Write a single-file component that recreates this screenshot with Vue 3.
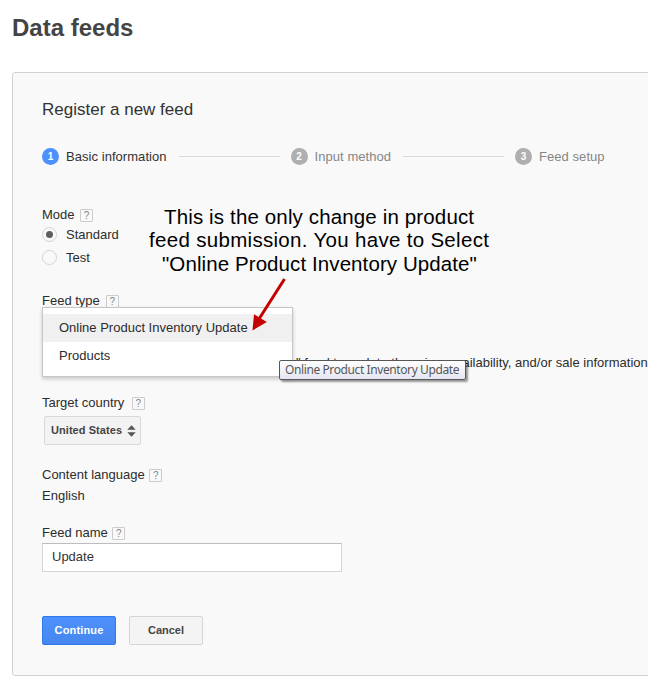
<script setup>
import { ref } from 'vue'

const steps = [
  { n: 1, label: 'Basic information', active: true },
  { n: 2, label: 'Input method', active: false },
  { n: 3, label: 'Feed setup', active: false },
]
const modes = ['Standard', 'Test']
const mode = ref('Standard')
const feedTypes = ['Online Product Inventory Update', 'Products']
const feedType = ref(feedTypes[0])
const feedName = ref('Update')
</script>

<template>
  <main class="page">
    <h1 class="title">Data feeds</h1>
    <section class="panel">
      <h2 class="heading">Register a new feed</h2>
      <div class="steps">
        <template v-for="s in steps" :key="s.n">
          <i v-if="s.n > 1" class="rule"></i>
          <div class="step" :class="{ active: s.active }">
            <span class="num">{{ s.n }}</span>
            <span class="step-label">{{ s.label }}</span>
          </div>
        </template>
      </div>

      <div class="field mode">
        <div class="label">Mode<span class="help">?</span></div>
        <div v-for="m in modes" :key="m" class="radio" @click="mode = m">
          <span class="dot" :class="{ on: mode === m }"></span><span>{{ m }}</span>
        </div>
      </div>

      <div class="field type">
        <div class="label">Feed type<span class="help">?</span></div>
        <div class="hint">" feed to update the price, availability, and/or sale information</div>
        <div class="menu">
          <div
            v-for="t in feedTypes"
            :key="t"
            class="option"
            :class="{ hover: feedType === t }"
            @click="feedType = t"
          >{{ t }}</div>
        </div>
        <div class="tooltip">Online Product Inventory Update</div>
      </div>

      <div class="field country">
        <div class="label">Target country<span class="help">?</span></div>
        <button class="select">
          <span>United States</span>
          <svg width="9" height="12" viewBox="0 0 9 12"><path d="M.3 4.8 4.5.3l4.2 4.5zM.3 7.2l4.2 4.5 4.2-4.5z" fill="#555" /></svg>
        </button>
      </div>

      <div class="field language">
        <div class="label">Content language<span class="help">?</span></div>
        <div class="value">English</div>
      </div>

      <div class="field name">
        <div class="label">Feed name<span class="help">?</span></div>
        <input v-model="feedName" class="input" type="text" />
      </div>

      <div class="actions">
        <button class="btn primary">Continue</button>
        <button class="btn">Cancel</button>
      </div>
    </section>

    <div class="note">
      <div class="n1">This is the only change in product</div>
      <div class="n2">feed submission. You have to Select</div>
      <div class="n3">"Online Product Inventory Update"</div>
    </div>
    <svg class="arrow" width="40" height="56" viewBox="0 0 40 56">
      <path d="M34.5 3 9 43" stroke="#c40000" stroke-width="3" fill="none" />
      <path d="M2.5 54.5 4 38.3 16.8 46z" fill="#c40000" />
    </svg>
  </main>
</template>

<style>
body {
  margin: 0;
  background: #fff;
  overflow: hidden;
}
</style>

<style scoped>
.page {
  position: relative;
  box-sizing: border-box;
  width: 648px;
  height: 683px;
  padding: 12px 0 0 12px;
  overflow: hidden;
  font: 13px/16px "Liberation Sans", Arial, sans-serif;
  color: #2c2c2c;
}
.title {
  margin: 0 0 28px;
  font-size: 24px;
  line-height: 32px;
  color: #444;
}
.panel {
  box-sizing: border-box;
  width: 700px;
  height: 604px;
  padding: 27px 0 0 29px;
  border: 1px solid #d2d2d2;
  border-radius: 3px;
  background: #f9f9f9;
}
.heading {
  margin: 0;
  font-size: 17px;
  font-weight: 400;
  line-height: 20px;
  color: #333;
}
.steps {
  display: flex;
  align-items: center;
  height: 17px;
  margin-top: 28px;
}
.step {
  display: flex;
  align-items: center;
  gap: 7px;
  color: #868686;
}
.step.active {
  color: #333;
}
.step-label {
  letter-spacing: 0.05px;
}
.num {
  width: 17px;
  height: 17px;
  border-radius: 50%;
  background: #afafaf;
  color: #fff;
  font-size: 10px;
  font-weight: 700;
  line-height: 17px;
  text-align: center;
}
.active .num {
  background: #4d90fe;
}
.rule {
  width: 101px;
  height: 1px;
  margin: 0 11px 0 12px;
  background: #d9d9d9;
}
.label {
  display: flex;
  align-items: center;
  height: 16px;
}
.help {
  box-sizing: border-box;
  width: 13px;
  height: 13px;
  margin: 1px 0 0 5.5px;
  border: 1px solid #ccc;
  border-radius: 1px;
  font-size: 10px;
  line-height: 11px;
  text-align: center;
  color: #888;
}
.type .help {
  margin-left: 6px;
}
.country .help {
  margin-left: 7.5px;
}
.language .help,
.name .help {
  margin-left: 4.5px;
}
.mode {
  height: 86px;
  margin-top: 42px;
}
.radio {
  display: flex;
  align-items: center;
  gap: 9px;
  height: 23px;
}
.dot {
  box-sizing: border-box;
  display: flex;
  align-items: center;
  justify-content: center;
  width: 15px;
  height: 15px;
  border: 1px solid #d4d4d4;
  border-radius: 50%;
}
.dot.on::after {
  content: "";
  width: 7px;
  height: 7px;
  border-radius: 50%;
  background: #5e5e5e;
}
.type {
  position: relative;
  height: 102px;
}
.hint {
  padding: 46px 0 0 254px;
  letter-spacing: 0.02px;
  white-space: nowrap;
}
.menu {
  position: absolute;
  left: 0;
  top: 14px;
  box-sizing: border-box;
  width: 251px;
  height: 70px;
  padding-top: 6px;
  border: 1px solid #c6c6c6;
  background: #fff;
  box-shadow: 0 2px 4px rgba(0, 0, 0, 0.2);
}
.option {
  padding-left: 16px;
  line-height: 28px;
}
.option.hover {
  background: #f0f0f0;
}
.tooltip {
  position: absolute;
  left: 237px;
  top: 67px;
  box-sizing: border-box;
  width: 187px;
  height: 20px;
  padding-left: 5px;
  border: 1px solid #575757;
  border-radius: 2px;
  background: linear-gradient(#fff, #e4e5f0);
  box-shadow: 2px 2px 2px rgba(0, 0, 0, 0.4);
  font: 12px/18px "Noto Sans", sans-serif;
  letter-spacing: -0.4px;
  white-space: nowrap;
  color: #575757;
}
.country {
  height: 72px;
}
.select {
  display: flex;
  align-items: center;
  justify-content: space-between;
  box-sizing: border-box;
  width: 97px;
  height: 29px;
  margin: 5px 0 0 2px;
  padding: 0 4px 0 6px;
  border: 1px solid #d8d8d8;
  border-radius: 2px;
  background: #f3f3f3;
  font: bold 11px/27px "Liberation Sans", Arial, sans-serif;
  letter-spacing: 0.06px;
  color: #444;
}
.language {
  height: 58px;
}
.value {
  margin-top: 5px;
}
.name {
  height: 91px;
}
.input {
  display: block;
  box-sizing: border-box;
  width: 300px;
  height: 29px;
  margin: 2px 0 0;
  padding: 0 9px 2px;
  border: 1px solid #d4d4d4;
  border-top-color: #bdbdbd;
  background: #fff;
  font: 13px/16px "Liberation Sans", Arial, sans-serif;
  color: #333;
  outline: none;
}
.actions {
  display: flex;
  gap: 13px;
}
.btn {
  box-sizing: border-box;
  width: 74px;
  height: 29px;
  padding: 0;
  border: 1px solid #d6d6d6;
  border-radius: 2px;
  background: #f4f4f4;
  font: bold 11px/27px "Liberation Sans", Arial, sans-serif;
  color: #444;
}
.btn.primary {
  border-color: #3079ed;
  background: linear-gradient(#4d90fe, #4787ed);
  color: #fff;
  letter-spacing: 0.15px;
}
.note {
  position: absolute;
  left: 149px;
  top: 204.5px;
  font-size: 20.5px;
  line-height: 23.5px;
  white-space: nowrap;
  color: #000;
}
.n1 {
  padding-left: 15px;
  letter-spacing: 0.14px;
}
.n2 {
  letter-spacing: 0.31px;
}
.n3 {
  padding-left: 13px;
  letter-spacing: 0.09px;
}
.arrow {
  position: absolute;
  left: 250px;
  top: 276px;
}
</style>
